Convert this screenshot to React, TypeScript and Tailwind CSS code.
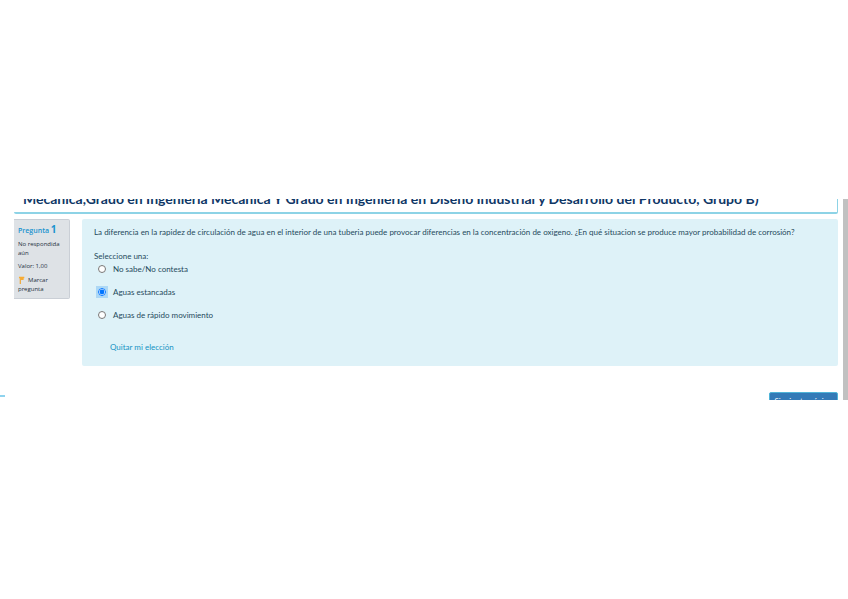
import React from "react";

const options = [
  { id: "ns", label: "No sabe/No contesta" },
  { id: "estancadas", label: "Aguas estancadas" },
  { id: "rapido", label: "Aguas de rápido movimiento" },
];

const Flag = () => {
  return (
    <svg
      viewBox="0 0 8 9"
      className="mr-0.5 inline-block h-2 w-2 align-middle"
      aria-hidden="true"
    >
      <path d="M1.4 1h1.4v8H1.4z" fill="#efa83a" />
      <path d="M.6.8h6v1.8h-.8v2H2.6v-2h-2z" fill="#f8ab33" />
    </svg>
  );
};

const QuestionInfo = () => {
  return (
    <aside className="w-14 shrink-0 self-start border border-l-0 border-[#cacfd6] rounded-r-xs bg-[#dee2e6] px-1 pt-1 pb-1 font-['Open_Sans',sans-serif] text-[6px] leading-[9px] text-[#1d2f40]">
      <h3 className="text-[7px] leading-[10px] font-semibold text-[#1a93cf]">
        Pregunta <span className="text-[10px] font-bold">1</span>
      </h3>
      <div className="mt-1">No respondida aún</div>
      <div className="mt-1">Valor: 1,00</div>
      <a href="#marcar" className="mt-[5px] block">
        <Flag />
        Marcar pregunta
      </a>
    </aside>
  );
};

const Question = () => {
  const [selected, setSelected] = React.useState("estancadas");

  return (
    <form className="min-w-0 flex-1 rounded-xs bg-[#def2f8] px-3 pt-2 pb-[14px] text-[8px] leading-[10px] text-[#1f4a5c]">
      <p className="whitespace-nowrap">
        La diferencia en la rapidez de circulación de agua en el interior de una
        tuberia puede provocar diferencias en la concentración de oxigeno. ¿En
        qué situacion se produce mayor probabilidad de corrosión?
      </p>
      <fieldset className="mt-[14px]">
        <legend>Seleccione una:</legend>
        <div className="mt-0.5 flex flex-col gap-3">
          {options.map((option) => (
            <div key={option.id} className="flex h-[11px] items-center gap-[5px]">
              <span
                className={
                  selected === option.id
                    ? "ml-0.5 flex h-3 w-3 items-center justify-center bg-[#add8f5]"
                    : "ml-0.5 flex h-3 w-3 items-center justify-center"
                }
              >
                <input
                  type="radio"
                  id={option.id}
                  name="respuesta"
                  checked={selected === option.id}
                  onChange={() => setSelected(option.id)}
                  className="h-2 w-2"
                />
              </span>
              <label htmlFor={option.id}>{option.label}</label>
            </div>
          ))}
        </div>
      </fieldset>
      <button
        type="button"
        onClick={() => setSelected("")}
        className="mt-[22px] ml-4 text-[#1593c4]"
      >
        Quitar mi elección
      </button>
    </form>
  );
};

const App = () => {
  return (
    <div className="flex min-h-screen flex-col justify-center bg-white font-[Lato,sans-serif]">
      <div className="flex h-[201px] overflow-hidden">
        <div className="flex w-[14px] shrink-0 items-end pb-[3px]">
          <div className="h-[2px] w-[5px] bg-[#8fd3ee]" />
        </div>
        <main className="min-w-0 flex-1">
          <header className="flex h-[15px] items-end overflow-hidden rounded-b-xs border-r border-b-2 border-[#8dd3e6] px-[9px] pb-[5px]">
            <h1 className="whitespace-nowrap text-[14px] leading-[17px] font-bold text-[#0f3766]">
              Mecánica,Grado en Ingeniería Mecánica Y Grado en Ingeniería en
              Diseño Industrial y Desarrollo del Producto, Grupo B)
            </h1>
          </header>
          <div className="mt-[5px] flex gap-3">
            <QuestionInfo />
            <Question />
          </div>
          <div className="mt-[26px] flex justify-end">
            <button className="rounded-xs border border-[#4fb4d8] bg-[#337ab7] px-[5px] py-[3px] text-[8px] leading-[10px] text-white">
              Siguiente página
            </button>
          </div>
        </main>
        <div className="ml-[5px] w-[5px] shrink-0 bg-[#c1c1c1]" />
      </div>
    </div>
  );
};

export default App;
